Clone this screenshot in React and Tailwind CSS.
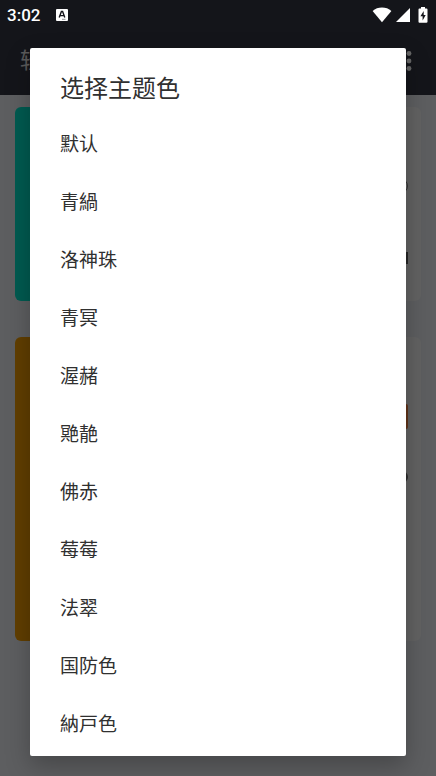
import { useState } from "react"

const THEMES = [
  "默认",
  "青緺",
  "洛神珠",
  "青冥",
  "渥赭",
  "䒌靘",
  "佛赤",
  "莓莓",
  "法翠",
  "国防色",
  "納戸色",
]

const StatusBar = () => (
  <div className="relative z-20 flex h-[30px] items-center justify-between pl-[7px] pr-2 text-white">
    <div className="flex items-center gap-4">
      <span className="font-[Roboto,sans-serif] text-[17px] leading-5 font-medium">3:02</span>
      <svg width="12" height="14" viewBox="0 0 12 14" aria-hidden="true">
        <rect x="0" y="1" width="12" height="12" rx="1" fill="#fff" />
        <path d="M3.2 9.5 5.4 3.5h1.2l2.2 6M4 7.6h4" fill="none" stroke="#14151b" strokeWidth="1.4" />
        <path d="M6 11.3h3.5" stroke="#77787c" strokeWidth="0.8" />
      </svg>
    </div>
    <div className="flex items-center">
      <svg width="20" height="16" viewBox="0 0 20 16" aria-hidden="true">
        <path d="M10 15.2 0.6 3.9C3.2 1.8 6.4 0.6 10 0.6s6.8 1.2 9.4 3.3Z" fill="#fff" />
      </svg>
      <svg className="ml-1 mr-2" width="14" height="14" viewBox="0 0 14 14" aria-hidden="true">
        <path d="M14 0v14H0Z" fill="#fff" />
      </svg>
      <svg width="10" height="16" viewBox="0 0 10 16" aria-hidden="true">
        <path d="M3 0h4v1.6h1.6c.5 0 .9.4.9.9v12.3c0 .5-.4.9-.9.9H1.4c-.5 0-.9-.4-.9-.9V2.5c0-.5.4-.9.9-.9H3Z" fill="#fff" />
        <path d="M5.7 4 2.4 9.3h2.2V13.5L7.7 8H5.7Z" fill="#14151b" />
      </svg>
    </div>
  </div>
)

const AppBar = () => (
  <div className="flex h-[65px] items-center justify-between pb-1 pl-5 pr-[17px]">
    <h1 className="text-[22px] leading-8 text-[#e0e0e0]">轻启动</h1>
    <button aria-label="更多选项" className="flex h-8 w-5 items-center justify-center">
      <svg width="6" height="20" viewBox="0 0 6 20" fill="#fff" aria-hidden="true">
        <circle cx="3" cy="2.5" r="2.4" />
        <circle cx="3" cy="10" r="2.4" />
        <circle cx="3" cy="17.5" r="2.4" />
      </svg>
    </button>
  </div>
)

const ThemeDialog = () => {
  const [selected, setSelected] = useState("默认")

  return (
    <div className="absolute inset-0 z-10 bg-black/60 px-[30px] pt-12 pb-5">
      <div
        role="dialog"
        aria-labelledby="theme-title"
        className="rounded-xs bg-white pb-[2px] text-[#303030] shadow-[0_10px_24px_rgba(0,0,0,0.25)]"
      >
        <h2 id="theme-title" className="px-[30px] pt-[25px] pb-[11px] text-2xl leading-8">
          选择主题色
        </h2>
        <ul>
          {THEMES.map((name) => (
            <li key={name}>
              <button
                onClick={() => setSelected(name)}
                aria-pressed={selected === name}
                className="h-[58px] w-full px-[30px] text-left text-[19px] leading-7"
              >
                {name}
              </button>
            </li>
          ))}
        </ul>
      </div>
    </div>
  )
}

export default function App() {
  return (
    <div className="relative min-h-screen overflow-hidden bg-[#e8ebef] font-['Roboto','Noto_Sans_CJK_SC',sans-serif]">
      <header className="bg-[#323543]">
        <StatusBar />
        <AppBar />
      </header>

      <main className="flex flex-col gap-9 px-[15px] pt-3">
        {/* status card */}
        <section className="flex h-[194px] justify-between overflow-hidden rounded-md bg-[#f4f4f4] pr-[13px]">
          <div className="w-24 bg-[#00e0c8]" />
          <div className="flex flex-col items-end pt-[71px]">
            <div className="h-4 w-4 rounded-full border border-[#808080]" />
            <div className="mt-[58px] h-3 w-3 bg-[#606060]" />
          </div>
        </section>

        {/* action card */}
        <section className="flex h-[304px] justify-between overflow-hidden rounded-md bg-[#f4f4f4] pr-[13px]">
          <div className="w-24 bg-[#f09c00]" />
          <div className="flex flex-col items-end pt-[67px]">
            <div className="h-[25px] w-16 rounded-xs bg-[#f08040]" />
            <div className="mt-[42px] h-3 w-3 rounded-full bg-[#707070]" />
          </div>
        </section>
      </main>

      <ThemeDialog />
    </div>
  )
}
